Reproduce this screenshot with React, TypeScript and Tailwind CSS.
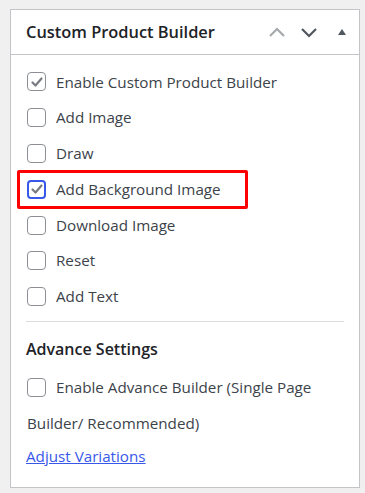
import React from 'react';

type Item = { label: string; checked?: boolean; focused?: boolean; highlight?: boolean };

const items: Item[] = [
  { label: 'Enable Custom Product Builder', checked: true },
  { label: 'Add Image' },
  { label: 'Draw' },
  { label: 'Add Background Image', checked: true, focused: true, highlight: true },
  { label: 'Download Image' },
  { label: 'Reset' },
  { label: 'Add Text' },
];

const Box = ({ checked, focused }: { checked?: boolean; focused?: boolean }) => (
  <span
    className={
      focused
        ? 'flex items-center justify-center w-[19px] h-[19px] shrink-0 rounded-[4px] border-2 border-[#3858e9] bg-white'
        : 'flex items-center justify-center w-[19px] h-[19px] shrink-0 rounded-[4px] border border-[#8c8f94] bg-white'
    }
  >
    {checked && (
      <svg width="14" height="14" viewBox="0 0 14 14" fill="none" stroke="#787c82" strokeWidth="2.2" strokeLinecap="round" strokeLinejoin="round">
        <polyline points="2.5 7.5 5.5 10.5 11.5 3.5" />
      </svg>
    )}
  </span>
);

export default function App() {
  return (
    <div className="w-[365px] h-[493px] bg-[#f0f0f1] pt-[9px] pl-[10px]" style={{ fontFamily: '"Open Sans", "Noto Sans", sans-serif' }}>
      <div className="w-[350px] h-[479px] bg-white border border-[#c3c4c7] flex flex-col">
        {/* header */}
        <div className="h-[45px] shrink-0 flex items-center justify-between border-b border-[#c3c4c7] pl-[15px] pr-[12px]">
          <h2 className="text-[16.4px] font-semibold text-[#1d2327]">Custom Product Builder</h2>
          <div className="flex items-center">
            <svg width="18" height="12" viewBox="0 0 18 12" fill="none" stroke="#a7aaad" strokeWidth="2.2">
              <polyline points="2 10 9 3 16 10" />
            </svg>
            <svg className="ml-[14px]" width="18" height="12" viewBox="0 0 18 12" fill="none" stroke="#50575e" strokeWidth="2.2">
              <polyline points="2 3 9 10 16 3" />
            </svg>
            <svg className="ml-[19px]" width="10" height="8" viewBox="0 0 10 8" fill="#50575e">
              <polygon points="1 7 5 1 9 7" />
            </svg>
          </div>
        </div>

        {/* options */}
        <div className="pt-[9px] px-[15px]">
          {items.map((it) => (
            <div key={it.label} className="relative h-[35.8px] flex items-center gap-[10px] pl-[1px]">
              {it.highlight && (
                <div className="absolute left-[-9px] top-[-1px] w-[231px] h-[39px] border-[3px] border-[#ff0000] rounded-[2px]" />
              )}
              <Box checked={it.checked} focused={it.focused} />
              <span className="text-[15.2px] text-[#3c434a]">{it.label}</span>
            </div>
          ))}
          <div className="mt-[6px] border-t border-[#dcdcde]" />

          <h3 className="mt-[15px] text-[16px] font-semibold text-[#1d2327]">Advance Settings</h3>

          <p className="mt-[8px] text-[15.2px] text-[#3c434a] leading-[36px] pl-[1px]">
            <span className="inline-flex align-middle mr-[10px] -mt-[3px]">
              <Box />
            </span>
            Enable Advance Builder (Single Page Builder/ Recommended)
          </p>
          <a href="#" className="block mt-[-2px] leading-[34px] text-[15.2px] text-[#3858e9] underline">
            Adjust Variations
          </a>
        </div>
      </div>
    </div>
  );
}
